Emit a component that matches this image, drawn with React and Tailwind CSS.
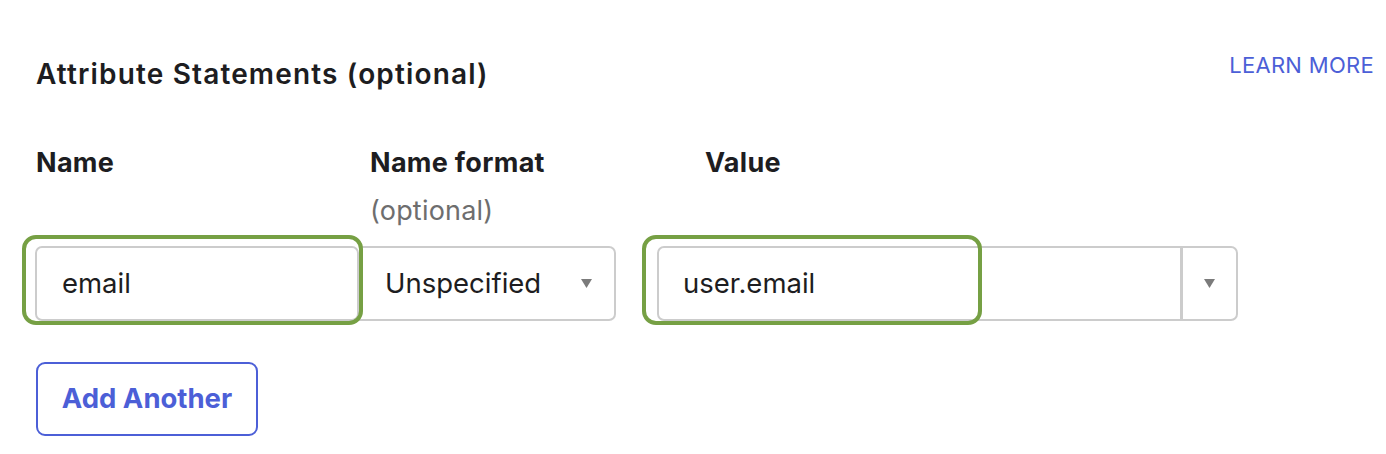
const FONT = { fontFamily: "Inter, 'Liberation Sans', sans-serif" };

function Caret() {
  return (
    <svg width="11" height="9" viewBox="0 0 11 9" className="shrink-0">
      <path d="M0 0 L11 0 L5.5 9 Z" fill="#7b7b7b" />
    </svg>
  );
}

function Highlight({ className }) {
  // green annotation frame drawn over the field
  return (
    <div
      className={
        "pointer-events-none absolute rounded-[14px] border-4 border-[#76a044] " +
        className
      }
    />
  );
}

export default function App() {
  return (
    <div className="w-[1386px] h-[454px] bg-white text-[#1d1d21]" style={FONT}>
      <div className="pl-[36px] pr-[12px] pt-[52px]">
        {/* header */}
        <div className="flex justify-between items-start">
          <h2 className="text-[28px] leading-[40px] font-semibold tracking-[1.15px] mt-[2px]">
            Attribute Statements (optional)
          </h2>
          <a className="text-[22px] leading-[26px] text-[#4c5fd7] tracking-[0.3px]">
            LEARN MORE
          </a>
        </div>

        {/* column labels */}
        <div className="flex mt-[45px] text-[27px] leading-[48px]">
          <div className="w-[334px] font-bold tracking-[0.3px]">Name</div>
          <div className="w-[335px]">
            <div className="font-bold tracking-[0.3px]">Name format</div>
            <div className="text-[#6e6e6e] tracking-[0.2px]">(optional)</div>
          </div>
          <div className="font-bold tracking-[0.3px]">Value</div>
        </div>

        {/* inputs */}
        <div className="flex mt-[11px] -ml-[1px] text-[27.5px]">
          <div className="relative">
            <div className="w-[324px] h-[75px] border-2 border-[#cccccc] rounded-[7px] flex items-center pl-[25px]">
              email
            </div>
            <Highlight className="-left-[13px] -top-[11px] w-[341px] h-[90px]" />
          </div>
          <div className="w-[257px] h-[75px] border-2 border-l-0 border-[#cccccc] rounded-r-[7px] flex items-center justify-between pl-[26px] pr-[22px]">
            <span>Unspecified</span>
            <Caret />
          </div>
          <div className="relative ml-[41px]">
            <div className="w-[581px] h-[75px] border-2 border-[#cccccc] rounded-[7px] flex">
              <div className="flex-1 flex items-center pl-[24px]">user.email</div>
              <div className="w-[56px] border-l-[3px] border-[#cccccc] flex items-center justify-center">
                <Caret />
              </div>
            </div>
            <Highlight className="-left-[15px] -top-[11px] w-[340px] h-[90px]" />
          </div>
        </div>

        {/* add another */}
        <button className="mt-[41px] w-[222px] h-[74px] border-2 border-[#4c5fd7] rounded-[9px] text-[#4c5fd7] text-[27.5px] font-bold">
          Add Another
        </button>
      </div>
    </div>
  );
}
